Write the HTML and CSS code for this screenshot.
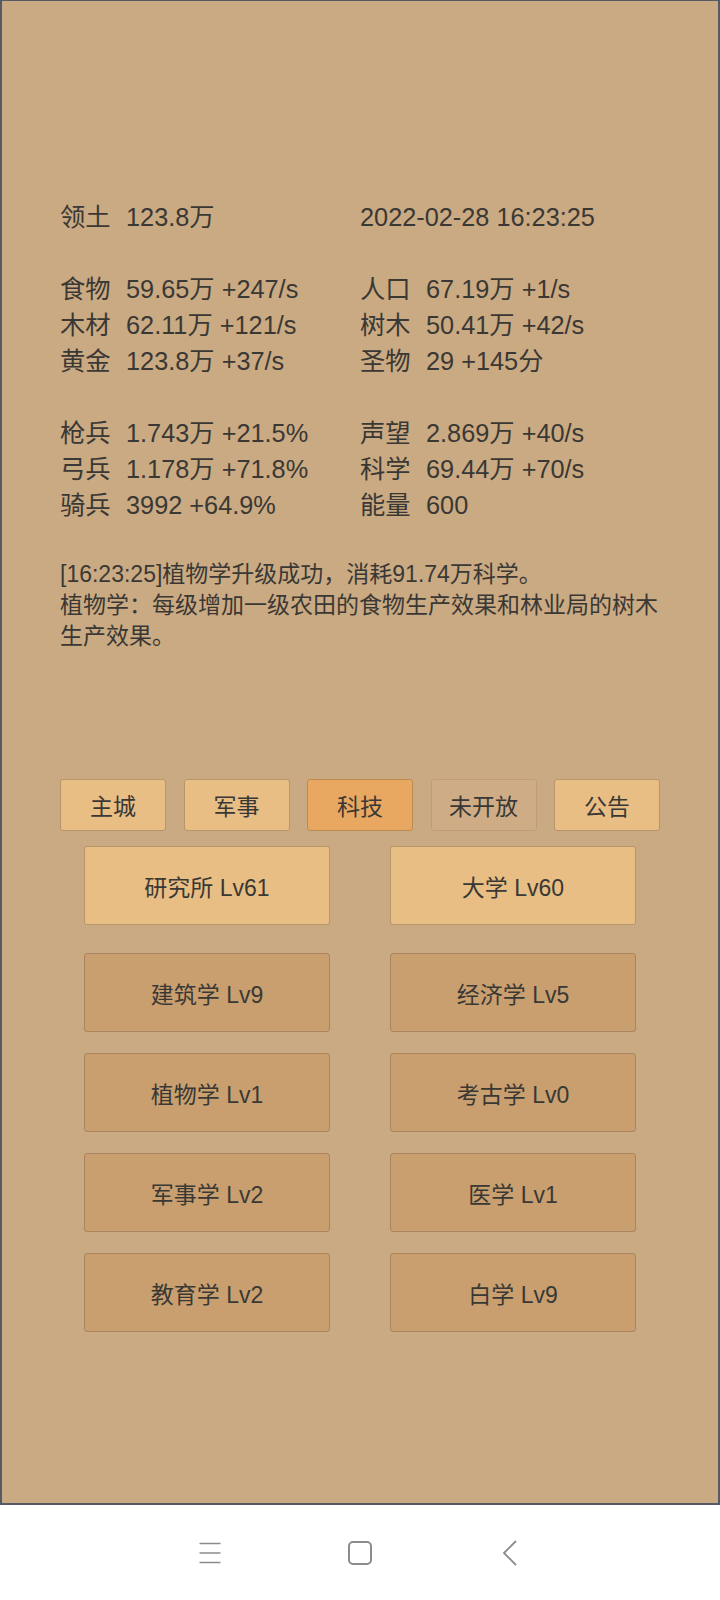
FILE: index.html
```html
<!DOCTYPE html>
<html lang="zh">
<head>
<meta charset="utf-8">
<title>领地</title>
<link rel="stylesheet" href="styles.css">
</head>
<body>
<div class="screen">
  <div class="stats">
    <div class="stat"><span class="label">领土</span><span>123.8万</span></div>
    <div class="stat"><span>2022-02-28 16:23:25</span></div>
  </div>
  <div class="stats group">
    <div class="stat"><span class="label">食物</span><span>59.65万 +247/s</span></div>
    <div class="stat"><span class="label">人口</span><span>67.19万 +1/s</span></div>
    <div class="stat"><span class="label">木材</span><span>62.11万 +121/s</span></div>
    <div class="stat"><span class="label">树木</span><span>50.41万 +42/s</span></div>
    <div class="stat"><span class="label">黄金</span><span>123.8万 +37/s</span></div>
    <div class="stat"><span class="label">圣物</span><span>29 +145分</span></div>
  </div>
  <div class="stats group">
    <div class="stat"><span class="label">枪兵</span><span>1.743万 +21.5%</span></div>
    <div class="stat"><span class="label">声望</span><span>2.869万 +40/s</span></div>
    <div class="stat"><span class="label">弓兵</span><span>1.178万 +71.8%</span></div>
    <div class="stat"><span class="label">科学</span><span>69.44万 +70/s</span></div>
    <div class="stat"><span class="label">骑兵</span><span>3992 +64.9%</span></div>
    <div class="stat"><span class="label">能量</span><span>600</span></div>
  </div>
  <div class="log">
    <p>[16:23:25]植物学升级成功，消耗91.74万科学。</p>
    <p>植物学：每级增加一级农田的食物生产效果和林业局的树木生产效果。</p>
  </div>
  <div class="tabs">
    <div class="tab">主城</div>
    <div class="tab">军事</div>
    <div class="tab active">科技</div>
    <div class="tab disabled">未开放</div>
    <div class="tab">公告</div>
  </div>
  <div class="tech-grid featured">
    <div class="tech light">研究所 Lv61</div>
    <div class="tech light">大学 Lv60</div>
  </div>
  <div class="tech-grid list">
    <div class="tech">建筑学 Lv9</div>
    <div class="tech">经济学 Lv5</div>
    <div class="tech">植物学 Lv1</div>
    <div class="tech">考古学 Lv0</div>
    <div class="tech">军事学 Lv2</div>
    <div class="tech">医学 Lv1</div>
    <div class="tech">教育学 Lv2</div>
    <div class="tech">白学 Lv9</div>
  </div>
</div>
<div class="navbar">
  <div class="nav-icon">
    <svg width="24" height="24" viewBox="0 0 24 24"><path d="M1.5 2.5H22.5M1.5 12H22.5M1.5 21.5H22.5" stroke="#8c8c8c" stroke-width="1.6" fill="none"/></svg>
  </div>
  <div class="nav-icon">
    <svg width="26" height="26" viewBox="0 0 26 26"><rect x="2" y="2" width="22" height="22" rx="4" ry="4" stroke="#8c8c8c" stroke-width="2" fill="none"/></svg>
  </div>
  <div class="nav-icon">
    <svg width="16" height="26" viewBox="0 0 16 26"><path d="M14 1L2 13L14 25" stroke="#8c8c8c" stroke-width="1.8" fill="none" stroke-linejoin="round"/></svg>
  </div>
</div>
</body>
</html>
```

FILE: styles.css
```css
html, body {
  margin: 0;
  padding: 0;
}

body {
  width: 720px;
  font-family: "Liberation Sans", "Noto Sans CJK SC", sans-serif;
  color: #3a3835;
  background: #ffffff;
}

.screen {
  box-sizing: border-box;
  height: 1505px;
  background: #caaa82;
  border: 2px solid #565a62;
  border-top-width: 1px;
  padding: 198px 58px 0 58px;
}

.stats {
  display: grid;
  grid-template-columns: 300px 300px;
  font-size: 25.3px;
  line-height: 36px;
}

.stats.group {
  margin-top: 36px;
}

.stat {
  display: flex;
  white-space: nowrap;
}

.label {
  flex: none;
  width: 66px;
}

.log {
  margin-top: 36px;
  font-size: 23px;
  line-height: 31px;
}

.log p {
  margin: 0;
}

.tabs {
  margin-top: 127px;
  display: flex;
  justify-content: space-between;
}

.tab {
  box-sizing: border-box;
  width: 106px;
  height: 52px;
  display: flex;
  align-items: center;
  justify-content: center;
  font-size: 23px;
  background: #e9be85;
  border: 1px solid #b8946a;
  border-radius: 3px;
}

.tab.active {
  background: #e9a862;
  border-color: #bd8a52;
}

.tab.disabled {
  background: #cdac86;
  border-color: #bb9d7b;
}

.tech-grid {
  display: grid;
  grid-template-columns: 246px 246px;
  justify-content: center;
  column-gap: 60px;
  row-gap: 21px;
}

.tech-grid.featured {
  margin-top: 15px;
}

.tech-grid.list {
  margin-top: 28px;
}

.tech {
  box-sizing: border-box;
  height: 79px;
  display: flex;
  align-items: center;
  justify-content: center;
  font-size: 23px;
  background: #c99f6f;
  border: 1px solid #a8855e;
  border-radius: 3px;
}

.tech.light {
  background: #e8be84;
  border-color: #b8946a;
}

.navbar {
  height: 95px;
  display: flex;
  justify-content: center;
  align-items: center;
  gap: 110px;
}

.nav-icon {
  width: 40px;
  height: 30px;
  display: flex;
  align-items: center;
  justify-content: center;
}
```
